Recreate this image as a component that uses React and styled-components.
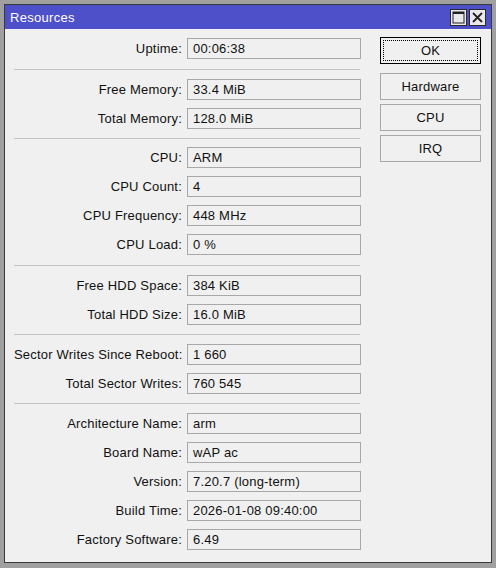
import React from 'react';
import styled, { createGlobalStyle } from 'styled-components';

const GlobalStyle = createGlobalStyle`
  html, body {
    margin: 0;
    padding: 0;
    background: #a0a0a0;
  }
  body {
    padding: 4px;
    font-family: "Liberation Sans", Arial, sans-serif;
    font-size: 13px;
    letter-spacing: 0.2px;
    color: #111;
  }
`;

const Window = styled.div`
  box-sizing: border-box;
  width: 488px;
  height: 559px;
  border: 1px solid #3a3a3a;
  background: #f0f0f0;
  display: flex;
  flex-direction: column;
`;

const TitleBar = styled.div`
  height: 24px;
  background: #4d50c9;
  display: flex;
  align-items: center;
  padding: 0 5px 0 5px;
`;

const Title = styled.div`
  flex: 1;
  color: #fff;
  font-size: 13px;
  letter-spacing: 0.3px;
`;

const TitleButtons = styled.div`
  display: flex;
  gap: 2px;
`;

const TitleButton = styled.div`
  box-sizing: border-box;
  width: 17px;
  height: 17px;
  background: #ebe8ec;
  border: 1px solid #2a2a2a;
  display: flex;
  align-items: center;
  justify-content: center;
`;

const Body = styled.div`
  display: flex;
  padding: 8px 10px 0 9px;
  gap: 19px;
`;

const Form = styled.div`
  width: 347px;
  margin-top: 1px;
  display: flex;
  flex-direction: column;
  gap: 8px;
`;

const Row = styled.div`
  display: grid;
  grid-template-columns: 168px 174px;
  column-gap: 5px;
  align-items: center;
  height: 21px;
`;

const Label = styled.div`
  text-align: right;
  white-space: nowrap;
`;

const Value = styled.div`
  box-sizing: border-box;
  height: 21px;
  line-height: 19px;
  border: 1px solid #a8a8a8;
  padding-left: 5px;
  white-space: nowrap;
`;

const Separator = styled.div`
  height: ${(p) => p.$h}px;
  width: 346px;
  display: flex;
  align-items: center;
  &::after {
    content: '';
    flex: 1;
    height: 1px;
    background: #c4c4c4;
  }
`;

const Buttons = styled.div`
  display: flex;
  flex-direction: column;
  gap: 4px;
  width: 101px;
`;

const Button = styled.div`
  position: relative;
  box-sizing: border-box;
  height: 27px;
  display: flex;
  align-items: center;
  justify-content: center;
  border: 1px solid ${(p) => (p.$default ? '#000' : '#a8a8a8')};
  margin-bottom: ${(p) => (p.$default ? '5px' : '0')};
  ${(p) =>
    p.$default &&
    `&::after {
      content: '';
      position: absolute;
      inset: 2px;
      border: 1px dotted #000;
    }`}
`;

const sepHeights = [0, 4, 2, 4, 3, 3];

const groups = [
  [['Uptime', '00:06:38']],
  [
    ['Free Memory', '33.4 MiB'],
    ['Total Memory', '128.0 MiB'],
  ],
  [
    ['CPU', 'ARM'],
    ['CPU Count', '4'],
    ['CPU Frequency', '448 MHz'],
    ['CPU Load', '0 %'],
  ],
  [
    ['Free HDD Space', '384 KiB'],
    ['Total HDD Size', '16.0 MiB'],
  ],
  [
    ['Sector Writes Since Reboot', '1 660'],
    ['Total Sector Writes', '760 545'],
  ],
  [
    ['Architecture Name', 'arm'],
    ['Board Name', 'wAP ac'],
    ['Version', '7.20.7 (long-term)'],
    ['Build Time', '2026-01-08 09:40:00'],
    ['Factory Software', '6.49'],
  ],
];

const App = () => {
  return (
    <>
      <GlobalStyle />
      <Window>
        <TitleBar>
          <Title>Resources</Title>
          <TitleButtons>
            <TitleButton>
              <svg width="13" height="13" viewBox="0 0 13 13">
                <rect x="1" y="1" width="11" height="11" fill="none" stroke="#222" strokeWidth="1" />
                <rect x="1" y="1" width="11" height="2" fill="#222" />
              </svg>
            </TitleButton>
            <TitleButton>
              <svg width="13" height="13" viewBox="0 0 13 13">
                <path d="M2 2 L11 11 M11 2 L2 11" stroke="#222" strokeWidth="1.8" />
              </svg>
            </TitleButton>
          </TitleButtons>
        </TitleBar>
        <Body>
          <Form>
            {groups.map((group, gi) => (
              <React.Fragment key={gi}>
                {gi > 0 && <Separator $h={sepHeights[gi]} />}
                {group.map(([label, value]) => (
                  <Row key={label}>
                    <Label>{label}:</Label>
                    <Value>{value}</Value>
                  </Row>
                ))}
              </React.Fragment>
            ))}
          </Form>
          <Buttons>
            <Button $default>OK</Button>
            <Button>Hardware</Button>
            <Button>CPU</Button>
            <Button>IRQ</Button>
          </Buttons>
        </Body>
      </Window>
    </>
  );
};

export default App;
